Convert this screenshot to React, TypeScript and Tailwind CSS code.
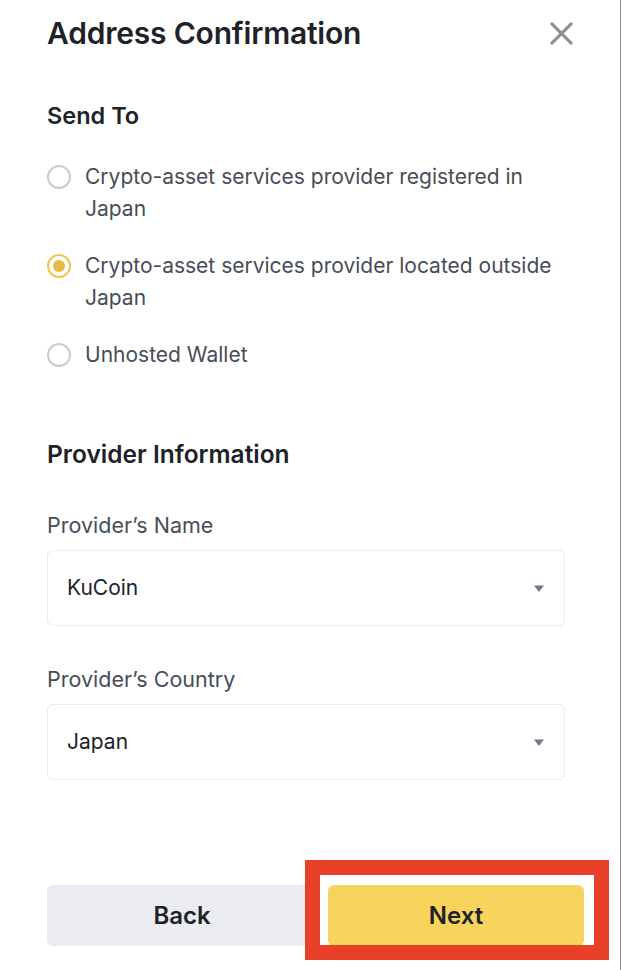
import { useState } from 'react';

const options = [
  { id: 'jp', label: 'Crypto-asset services provider registered in Japan' },
  { id: 'outside', label: 'Crypto-asset services provider located outside Japan' },
  { id: 'unhosted', label: 'Unhosted Wallet' },
];

function Caret() {
  return (
    <svg width="10" height="7" viewBox="0 0 10 7" className="shrink-0">
      <path d="M0 0.5h10L5.6 6.3a0.8 0.8 0 0 1-1.2 0z" fill="#707a8a" />
    </svg>
  );
}

function SelectBox({ value }: { value: string }) {
  return (
    <div className="flex h-[76px] items-center justify-between rounded-md border border-[#eaecef] pl-[19px] pr-[20px]">
      <span className="text-[21px] text-[#1e2329]">{value}</span>
      <Caret />
    </div>
  );
}

export default function App() {
  const [selected, setSelected] = useState('outside');

  return (
    <div
      className="relative h-[970px] w-[621px] overflow-hidden border-r border-[#8c8c8c] bg-white"
      style={{ fontFamily: 'Inter, "Noto Sans", sans-serif' }}
    >
      <div className="pl-[47px] pr-[55px] pt-[15px]">
        <div className="flex items-center justify-between">
          <h1 className="text-[30px] font-semibold leading-[36px] tracking-[-0.2px] text-[#1e2329]">
            Address Confirmation
          </h1>
          <button className="-mr-[8px] flex h-[30px] w-[24px] items-center justify-center">
            <svg width="23" height="23" viewBox="0 0 24 24">
              <path d="M2 2L22 22M22 2L2 22" stroke="#8a8f96" strokeWidth="3.2" strokeLinecap="round" />
            </svg>
          </button>
        </div>

        <h2 className="mt-[51px] text-[23.5px] font-semibold leading-[28px] text-[#1e2329]">Send To</h2>

        <div className="mt-[31px] flex flex-col gap-[25px]">
          {options.map((o) => {
            const on = selected === o.id;
            return (
              <button
                key={o.id}
                onClick={() => setSelected(o.id)}
                className="flex items-start gap-[14px] text-left"
              >
                <span
                  className={`mt-[4px] flex h-[24px] w-[24px] shrink-0 items-center justify-center rounded-full border-2 ${
                    on ? 'border-[#f0c54e]' : 'border-[#c8ccd2]'
                  }`}
                >
                  {on && <span className="h-[12px] w-[12px] rounded-full bg-[#e6b940]" />}
                </span>
                <span className="w-[485px] text-[21px] leading-[32px] text-[#474d57]">{o.label}</span>
              </button>
            );
          })}
        </div>

        <h2 className="mt-[69px] text-[24.5px] font-semibold leading-[28px] text-[#1e2329]">
          Provider Information
        </h2>

        <div className="mt-[43px] text-[21.5px] leading-[28px] text-[#474d57]">Provider’s Name</div>
        <div className="mt-[11px]">
          <SelectBox value="KuCoin" />
        </div>

        <div className="mt-[39px] text-[21.5px] leading-[28px] text-[#474d57]">Provider’s Country</div>
        <div className="mt-[11px]">
          <SelectBox value="Japan" />
        </div>

        <div className="mt-[105px] flex w-[537px] gap-[11px]">
          <button className="h-[61px] w-[270px] shrink-0 rounded-md bg-[#eaecef] text-[24px] font-semibold text-[#1e2329]">
            Back
          </button>
          <button className="h-[61px] w-[256px] shrink-0 rounded-md bg-[#f7d45b] text-[24px] font-semibold text-[#1e2329]">
            Next
          </button>
        </div>
      </div>

      <div className="pointer-events-none absolute left-[305px] top-[860px] h-[100px] w-[304px] border-[15px] border-[#e9402a]" />
    </div>
  );
}
